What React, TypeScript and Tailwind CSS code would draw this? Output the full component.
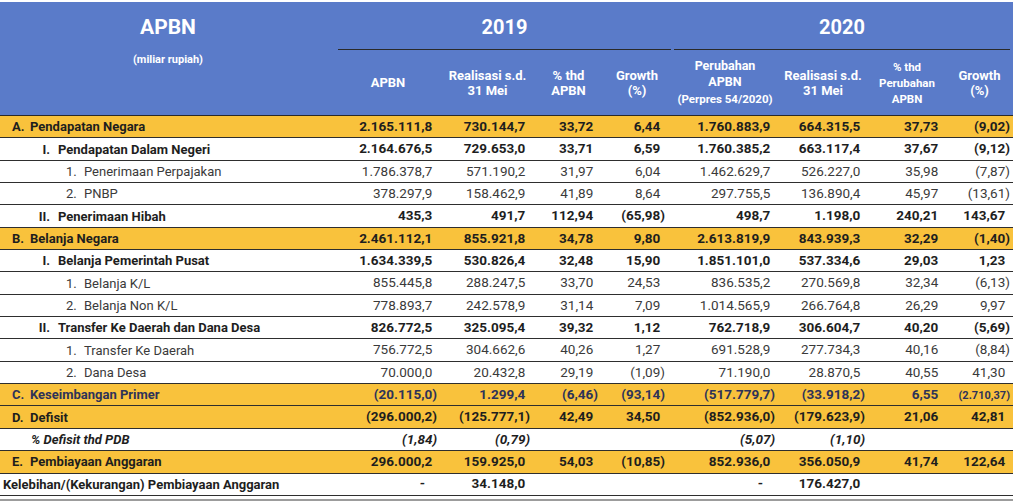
import React from 'react';

type Row = {
  lv: 'A' | 'I' | 'n' | 'pct' | 'x';
  mark?: string;
  label: string;
  v: string[];
  bold?: boolean;
  hl?: boolean;
  navy?: boolean;
  italic?: boolean;
};

const rows: Row[] = [
  { lv: 'A', mark: 'A.', label: 'Pendapatan Negara', bold: true, hl: true, v: ['2.165.111,8', '730.144,7', '33,72', '6,44', '1.760.883,9', '664.315,5', '37,73', '(9,02)'] },
  { lv: 'I', mark: 'I.', label: 'Pendapatan Dalam Negeri', bold: true, v: ['2.164.676,5', '729.653,0', '33,71', '6,59', '1.760.385,2', '663.117,4', '37,67', '(9,12)'] },
  { lv: 'n', mark: '1.', label: 'Penerimaan Perpajakan', v: ['1.786.378,7', '571.190,2', '31,97', '6,04', '1.462.629,7', '526.227,0', '35,98', '(7,87)'] },
  { lv: 'n', mark: '2.', label: 'PNBP', v: ['378.297,9', '158.462,9', '41,89', '8,64', '297.755,5', '136.890,4', '45,97', '(13,61)'] },
  { lv: 'I', mark: 'II.', label: 'Penerimaan Hibah', bold: true, v: ['435,3', '491,7', '112,94', '(65,98)', '498,7', '1.198,0', '240,21', '143,67'] },
  { lv: 'A', mark: 'B.', label: 'Belanja Negara', bold: true, hl: true, v: ['2.461.112,1', '855.921,8', '34,78', '9,80', '2.613.819,9', '843.939,3', '32,29', '(1,40)'] },
  { lv: 'I', mark: 'I.', label: 'Belanja Pemerintah Pusat', bold: true, v: ['1.634.339,5', '530.826,4', '32,48', '15,90', '1.851.101,0', '537.334,6', '29,03', '1,23'] },
  { lv: 'n', mark: '1.', label: 'Belanja K/L', v: ['855.445,8', '288.247,5', '33,70', '24,53', '836.535,2', '270.569,8', '32,34', '(6,13)'] },
  { lv: 'n', mark: '2.', label: 'Belanja Non K/L', v: ['778.893,7', '242.578,9', '31,14', '7,09', '1.014.565,9', '266.764,8', '26,29', '9,97'] },
  { lv: 'I', mark: 'II.', label: 'Transfer Ke Daerah dan Dana Desa', bold: true, v: ['826.772,5', '325.095,4', '39,32', '1,12', '762.718,9', '306.604,7', '40,20', '(5,69)'] },
  { lv: 'n', mark: '1.', label: 'Transfer Ke Daerah', v: ['756.772,5', '304.662,6', '40,26', '1,27', '691.528,9', '277.734,3', '40,16', '(8,84)'] },
  { lv: 'n', mark: '2.', label: 'Dana Desa', v: ['70.000,0', '20.432,8', '29,19', '(1,09)', '71.190,0', '28.870,5', '40,55', '41,30'] },
  { lv: 'A', mark: 'C.', label: 'Keseimbangan Primer', bold: true, hl: true, navy: true, v: ['(20.115,0)', '1.299,4', '(6,46)', '(93,14)', '(517.779,7)', '(33.918,2)', '6,55', '(2.710,37)'] },
  { lv: 'A', mark: 'D.', label: 'Defisit', bold: true, hl: true, v: ['(296.000,2)', '(125.777,1)', '42,49', '34,50', '(852.936,0)', '(179.623,9)', '21,06', '42,81'] },
  { lv: 'pct', label: '% Defisit thd PDB', bold: true, italic: true, v: ['(1,84)', '(0,79)', '', '', '(5,07)', '(1,10)', '', ''] },
  { lv: 'A', mark: 'E.', label: 'Pembiayaan Anggaran', bold: true, hl: true, v: ['296.000,2', '159.925,0', '54,03', '(10,85)', '852.936,0', '356.050,9', '41,74', '122,64'] },
  { lv: 'x', label: 'Kelebihan/(Kekurangan) Pembiayaan Anggaran', bold: true, v: ['-', '34.148,0', '', '', '-', '176.427,0', '', ''] },
];

const grid = 'grid grid-cols-[336px_104px_95px_67px_70px_106px_90px_78px_67px]';
const pads = ['pr-[3px]', 'pr-[5px]', 'pr-[4px]', 'pr-[7px]', 'pr-[3px]', 'pr-[3px]', 'pr-[3px]', 'pr-[3px]'];

function Label({ r }: { r: Row }) {
  if (r.lv === 'A')
    return (
      <div className="flex pl-[12px]">
        <span className="w-[18px]">{r.mark}</span>
        <span>{r.label}</span>
      </div>
    );
  if (r.lv === 'I')
    return (
      <div className="flex">
        <span className="w-[50px] text-right">{r.mark}</span>
        <span className="pl-[8px]">{r.label}</span>
      </div>
    );
  if (r.lv === 'n')
    return (
      <div className="flex pl-[66px]">
        <span className="w-[18px]">{r.mark}</span>
        <span>{r.label}</span>
      </div>
    );
  if (r.lv === 'pct') return <div className="pl-[31px]">{r.label}</div>;
  return <div className="pl-[3px]">{r.label}</div>;
}

function Num({ v, small }: { v: string; small?: boolean }) {
  if (!v) return null;
  if (v === '-') return <span className="pr-[12px]">-</span>;
  const neg = v.endsWith(')');
  return (
    <span className={small ? 'text-[11px]' : ''}>
      {v}
      {!neg && <span className="invisible">)</span>}
    </span>
  );
}

function SubHead({ children, className = '' }: { children: React.ReactNode; className?: string }) {
  return (
    <div className={`flex flex-col items-center justify-center text-center border-b border-[#2a2a2a] ${className}`}>
      {children}
    </div>
  );
}

export default function App() {
  return (
    <div className="w-[1017px] h-[501px] bg-white pt-[2px] overflow-hidden font-['Roboto',sans-serif]">
      <div className="w-[1013px]">
        <div className={`${grid} grid-rows-[48px_66px] bg-[#5a7bc9] text-white font-bold`}>
          <div className="row-span-2 flex flex-col items-center pt-[11px] border-b border-[#2a2a2a]">
            <div className="text-[21px] leading-[28px]">APBN</div>
            <div className="text-[11px] leading-[14px] mt-[12px]">(miliar rupiah)</div>
          </div>
          <div className="col-span-4 pl-[2px] pr-[1px]">
            <div className="h-full flex items-center justify-center pt-[3px] text-[20px] border-b border-[#2a2a2a]">2019</div>
          </div>
          <div className="col-span-4 pl-[2px] pr-[3px]">
            <div className="h-full flex items-center justify-center pt-[3px] text-[20px] border-b border-[#2a2a2a]">2020</div>
          </div>
          <SubHead className="text-[13px] leading-[15px]">APBN</SubHead>
          <SubHead className="text-[13px] leading-[15px]">
            <span>Realisasi s.d.</span>
            <span>31 Mei</span>
          </SubHead>
          <SubHead className="text-[13px] leading-[15px]">
            <span>% thd</span>
            <span>APBN</span>
          </SubHead>
          <SubHead className="text-[13px] leading-[15px]">
            <span>Growth</span>
            <span>(%)</span>
          </SubHead>
          <SubHead className="leading-[16.5px]">
            <span className="text-[12.5px]">Perubahan</span>
            <span className="text-[12.5px]">APBN</span>
            <span className="text-[11.5px]">(Perpres 54/2020)</span>
          </SubHead>
          <SubHead className="text-[13px] leading-[15px]">
            <span>Realisasi s.d.</span>
            <span>31 Mei</span>
          </SubHead>
          <SubHead className="text-[11.5px] leading-[16px]">
            <span>% thd</span>
            <span>Perubahan</span>
            <span>APBN</span>
          </SubHead>
          <SubHead className="text-[13px] leading-[15px]">
            <span>Growth</span>
            <span>(%)</span>
          </SubHead>
        </div>

        {rows.map((r, i) => (
          <div
            key={i}
            className={`${grid} h-[22.35px] items-center border-b border-[#2e2e2e] ${r.hl ? 'bg-[#f9c23c]' : 'bg-white'} ${
              r.bold ? 'font-bold' : 'font-normal'
            } ${r.italic ? 'italic' : ''} ${r.navy ? 'text-[#2e3358]' : r.bold ? 'text-[#1e1e1e]' : 'text-[#3a3a3a]'}`}
          >
            <div className="text-[13px] leading-none whitespace-nowrap">
              <Label r={r} />
            </div>
            {r.v.map((v, j) => (
              <div key={j} className={`text-right text-[13.5px] leading-none whitespace-nowrap ${pads[j]}`}>
                <Num v={v} small={r.navy && j === 7} />
              </div>
            ))}
          </div>
        ))}
        <div className="mt-[3px] h-[2px] bg-[#9c9c9c]" />
      </div>
    </div>
  );
}
